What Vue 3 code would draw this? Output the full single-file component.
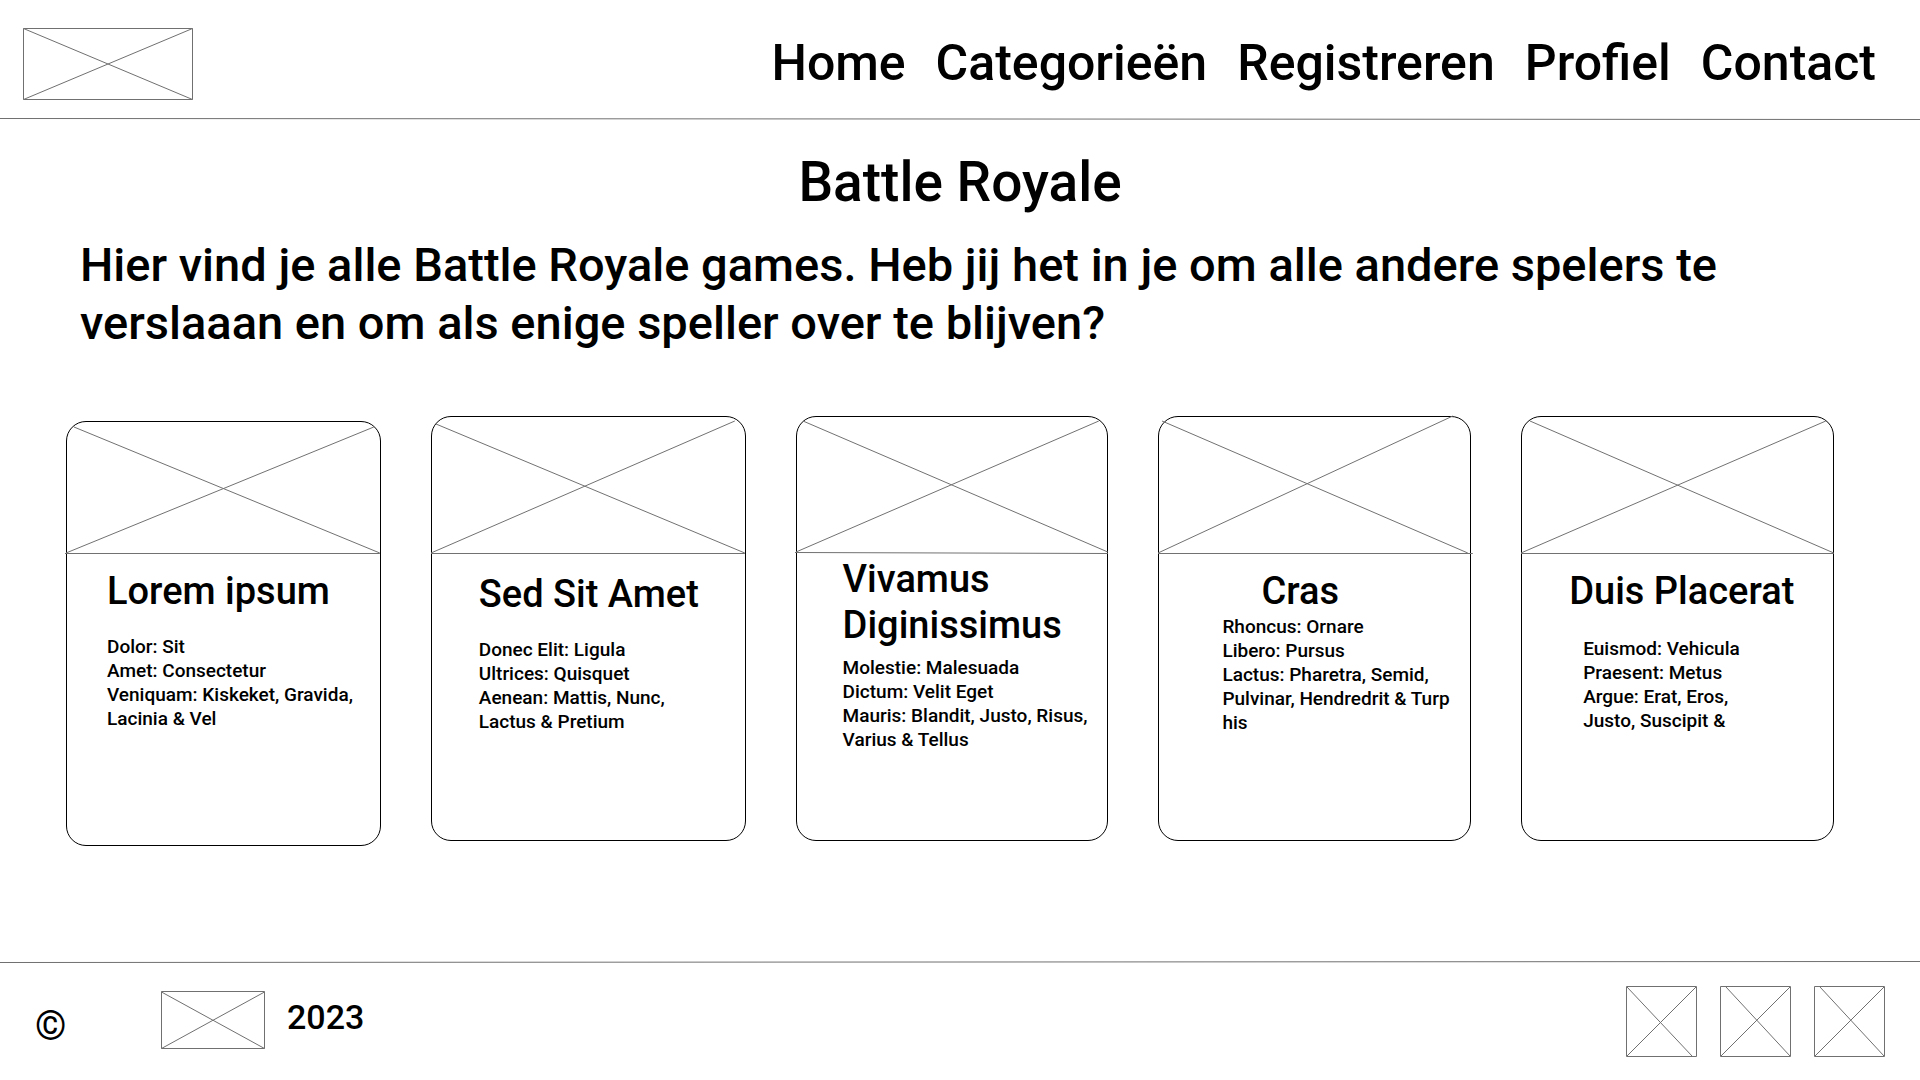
<script setup>
const links = ['Home', 'Categorieën', 'Registreren', 'Profiel', 'Contact']

const games = [
  {
    name: 'lorem',
    title: 'Lorem ipsum',
    lines: ['Dolor: Sit', 'Amet: Consectetur', 'Veniquam: Kiskeket, Gravida,', 'Lacinia & Vel'],
    viewBox: '0 0 315 132',
    cross: 'M8 6 L314 132 M0 132 L308 6',
    base: 'M-1 132.5 H314',
  },
  {
    name: 'sed',
    title: 'Sed Sit Amet',
    lines: ['Donec Elit: Ligula', 'Ultrices: Quisquet', 'Aenean: Mattis, Nunc,', 'Lactus & Pretium'],
    viewBox: '0 0 315 137',
    cross: 'M5 8 L314 137 M0 137 L304 5',
    base: 'M0 137.5 H314',
  },
  {
    name: 'vivamus',
    title: 'Vivamus\nDiginissimus',
    lines: ['Molestie: Malesuada', 'Dictum: Velit Eget', 'Mauris: Blandit, Justo, Risus,', 'Varius & Tellus'],
    viewBox: '0 0 313 137',
    cross: 'M7 5 L312 136 M0 136 L303 5',
    base: 'M-1 136.5 L312 137.5',
  },
  {
    name: 'cras',
    title: 'Cras',
    lines: ['Rhoncus: Ornare', 'Libero: Pursus', 'Lactus: Pharetra, Semid,', 'Pulvinar, Hendredrit & Turp', 'his'],
    viewBox: '0 0 313 137',
    cross: 'M4 5 L310 137 M0 137 L295 0',
    base: 'M0 137.5 H315',
  },
  {
    name: 'duis',
    title: 'Duis Placerat',
    lines: ['Euismod: Vehicula', 'Praesent: Metus', 'Argue: Erat, Eros,', 'Justo, Suscipit &'],
    viewBox: '0 0 313 137',
    cross: 'M9 5 L313 137 M0 137 L305 5',
    base: 'M0 137.5 H313',
  },
]

const socials = [
  'M1 1 L66 70 M1 70 L70 1',
  'M6 1 L70 70 M1 70 L70 1',
  'M6 1 L70 70 M1 70 L70 1',
]
</script>

<template>
  <div class="page">
    <header class="header">
      <a class="logo" href="#" aria-label="Logo">
        <svg width="170" height="72" viewBox="0 0 170 72" aria-hidden="true">
          <path d="M0.5 0.5 H169.5 V71.5 H0.5 Z M0.5 0.5 L169.5 71.5 M0.5 71.5 L169.5 0.5" />
        </svg>
      </a>
      <nav class="nav">
        <a v-for="link in links" :key="link" href="#">{{ link }}</a>
      </nav>
    </header>
    <svg class="rule" width="100%" height="3" aria-hidden="true">
      <line x1="0" y1="0.5" x2="100%" y2="1.5" />
    </svg>

    <main class="main">
      <h1>Battle Royale</h1>
      <p class="intro">Hier vind je alle Battle Royale games. Heb jij het in je om alle andere spelers te<br />verslaaan en om als enige speller over te blijven?</p>
      <section class="cards">
        <article v-for="game in games" :key="game.name" class="card" :class="game.name">
          <svg class="photo" :viewBox="game.viewBox" preserveAspectRatio="none" aria-hidden="true">
            <path :d="game.cross" />
            <path :d="game.base" />
          </svg>
          <h2>{{ game.title }}</h2>
          <ul>
            <li v-for="line in game.lines" :key="line">{{ line }}</li>
          </ul>
        </article>
      </section>
    </main>

    <svg class="rule" width="100%" height="3" aria-hidden="true">
      <line x1="0" y1="1.5" x2="100%" y2="0.5" />
    </svg>
    <footer class="footer">
      <span class="copyright">©</span>
      <svg class="brand" width="104" height="58" viewBox="0 0 104 58" aria-hidden="true">
        <path d="M0.5 0.5 H103.5 V57.5 H0.5 Z M0.5 1 L103.5 57.5 M0.5 57.5 L103.5 1" />
      </svg>
      <span class="year">2023</span>
      <div class="socials">
        <a v-for="(cross, i) in socials" :key="i" href="#" :aria-label="'Social ' + (i + 1)">
          <svg width="71" height="71" viewBox="0 0 71 71" aria-hidden="true">
            <path d="M0.5 0.5 H70.5 V70.5 H0.5 Z" />
            <path :d="cross" />
          </svg>
        </a>
      </div>
    </footer>
  </div>
</template>

<style>
body {
  margin: 0;
  background: #fff;
}
</style>

<style scoped>
.page {
  display: flex;
  flex-direction: column;
  min-height: 100vh;
  color: #000;
  font-family: Roboto, "Liberation Sans", sans-serif;
  font-weight: 500;
}

svg {
  display: block;
  fill: none;
  stroke: #707070;
  stroke-width: 1px;
  overflow: visible;
}

a {
  color: inherit;
  text-decoration: none;
}

.header {
  display: flex;
  align-items: center;
  justify-content: space-between;
  height: 118px;
  padding: 0 44px 0 23px;
  box-sizing: border-box;
}

.logo {
  margin-top: 10px;
}

.nav {
  display: flex;
  gap: 30px;
  font-size: 50px;
  line-height: 64px;
  margin-top: 8px;
}

.rule {
  flex: none;
}

.main {
  flex: 1;
  padding: 26px 86px 40px 66px;
}

h1 {
  margin: 0;
  padding-left: 20px;
  text-align: center;
  font-size: 55px;
  line-height: 70px;
  font-weight: 500;
}

.intro {
  margin: 19px 0 0 14px;
  font-size: 47px;
  line-height: 58px;
}

.cards {
  display: grid;
  grid-template-columns: 315fr 315fr 313fr 313fr 313fr;
  column-gap: 50px;
  margin-top: 64px;
}

.card {
  box-sizing: border-box;
  min-height: 425px;
  border: 1px solid #000;
  border-radius: 20px;
}

.photo {
  width: calc(100% + 2px);
  height: 137px;
  margin: -1px -1px 0;
}

h2 {
  margin: 0;
  font-size: 38px;
  line-height: 46px;
  font-weight: 500;
  white-space: pre;
}

ul {
  margin: 0;
  padding: 0;
  list-style: none;
  font-size: 19px;
  line-height: 24px;
  white-space: nowrap;
}

.lorem {
  margin: 5px 0 -5px;
}

.lorem .photo {
  height: 132px;
}

.lorem h2 {
  padding: 15px 0 0 40px;
}

.lorem ul {
  padding: 21px 0 0 40px;
}

.sed h2 {
  padding: 18px 0 0 47px;
}

.sed ul {
  padding: 21px 0 0 47px;
}

.vivamus h2 {
  padding: 3px 0 0 46px;
}

.vivamus ul {
  padding: 8px 0 0 46px;
}

.cras h2 {
  padding: 15px 0 0 102px;
}

.cras ul {
  padding: 1px 0 0 63px;
}

.duis h2 {
  padding: 15px 0 0 47px;
}

.duis ul {
  padding: 23px 0 0 61px;
}

.footer {
  display: flex;
  align-items: flex-start;
  height: 116px;
  padding: 22px 35px 0;
  box-sizing: border-box;
}

.copyright {
  width: 126px;
  padding-top: 18px;
  font-size: 40px;
  line-height: 46px;
}

.brand {
  margin-top: 5px;
}

.year {
  margin: 8px 0 0 22px;
  font-size: 34px;
  line-height: 46px;
}

.socials {
  display: flex;
  gap: 23px;
  margin-left: auto;
}
</style>
